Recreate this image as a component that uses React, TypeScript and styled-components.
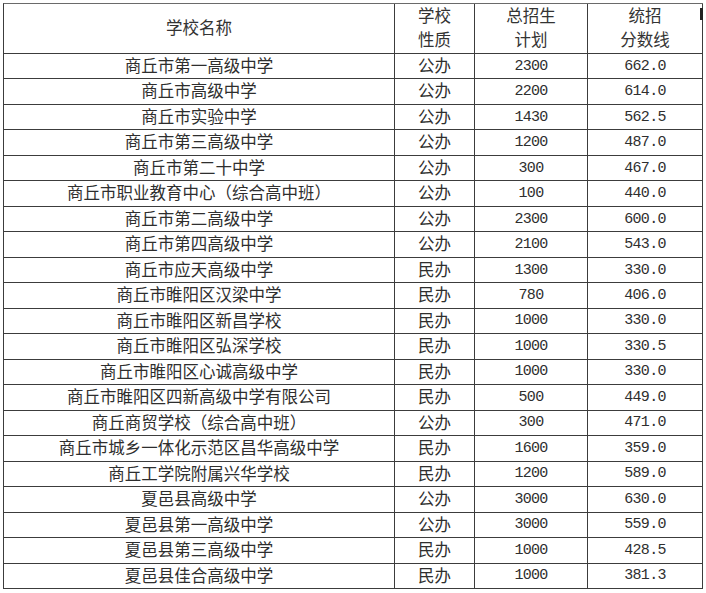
import React from "react";
import styled, { createGlobalStyle } from "styled-components";

const Global = createGlobalStyle`
  html, body { margin: 0; padding: 0; background: #fff; }
  body { font-family: "Noto Sans CJK SC", "Noto Sans", sans-serif; }
`;

const Page = styled.div`
  padding: 3px;
  width: 706px;
  height: 593px;
  box-sizing: border-box;
  position: relative;
`;

const Grid = styled.div`
  display: grid;
  grid-template-columns: 391px 80px 113px 115px;
  grid-template-rows: 50px repeat(21, 1fr);
  width: 700px;
  height: 586px;
  box-sizing: border-box;
  border-left: 1px solid #3c3c3c;
  border-top: 1px solid #6a6a6a;
`;

const Cell = styled.div<{ $num?: boolean }>`
  box-sizing: border-box;
  border-right: 1px solid #3c3c3c;
  border-bottom: 1px solid #3c3c3c;
  display: flex;
  align-items: center;
  justify-content: center;
  color: #2e2e2e;
  white-space: nowrap;
  padding-bottom: ${(p) => (p.$num ? "0" : "2px")};
  font-family: ${(p) =>
    p.$num
      ? `"Liberation Mono", "DejaVu Sans Mono", monospace`
      : `"Noto Sans CJK SC", "Noto Sans", sans-serif`};
  font-size: ${(p) => (p.$num ? "15px" : "16.5px")};
  letter-spacing: ${(p) => (p.$num ? "-0.7px" : "0")};
  line-height: 1;
`;

const HeadCell = styled(Cell)`
  flex-direction: column;
  line-height: 24px;
  padding-bottom: 3px;
  color: #333;
`;

const Mark = styled.div`
  position: absolute;
  left: 700px;
  top: 8px;
  width: 3px;
  height: 12px;
  background: #222;
`;

type Row = [string, string, string, string];

const rows: Row[] = [
  ["商丘市第一高级中学", "公办", "2300", "662.0"],
  ["商丘市高级中学", "公办", "2200", "614.0"],
  ["商丘市实验中学", "公办", "1430", "562.5"],
  ["商丘市第三高级中学", "公办", "1200", "487.0"],
  ["商丘市第二十中学", "公办", "300", "467.0"],
  ["商丘市职业教育中心（综合高中班）", "公办", "100", "440.0"],
  ["商丘市第二高级中学", "公办", "2300", "600.0"],
  ["商丘市第四高级中学", "公办", "2100", "543.0"],
  ["商丘市应天高级中学", "民办", "1300", "330.0"],
  ["商丘市睢阳区汉梁中学", "民办", "780", "406.0"],
  ["商丘市睢阳区新昌学校", "民办", "1000", "330.0"],
  ["商丘市睢阳区弘深学校", "民办", "1000", "330.5"],
  ["商丘市睢阳区心诚高级中学", "民办", "1000", "330.0"],
  ["商丘市睢阳区四新高级中学有限公司", "民办", "500", "449.0"],
  ["商丘商贸学校（综合高中班）", "公办", "300", "471.0"],
  ["商丘市城乡一体化示范区昌华高级中学", "民办", "1600", "359.0"],
  ["商丘工学院附属兴华学校", "民办", "1200", "589.0"],
  ["夏邑县高级中学", "公办", "3000", "630.0"],
  ["夏邑县第一高级中学", "公办", "3000", "559.0"],
  ["夏邑县第三高级中学", "民办", "1000", "428.5"],
  ["夏邑县佳合高级中学", "民办", "1000", "381.3"],
];

export default function App() {
  return (
    <Page>
      <Global />
      <Grid role="table">
        <HeadCell>学校名称</HeadCell>
        <HeadCell>
          <span>学校</span>
          <span>性质</span>
        </HeadCell>
        <HeadCell>
          <span>总招生</span>
          <span>计划</span>
        </HeadCell>
        <HeadCell>
          <span>统招</span>
          <span>分数线</span>
        </HeadCell>
        {rows.map((r, i) => (
          <React.Fragment key={i}>
            <Cell>{r[0]}</Cell>
            <Cell>{r[1]}</Cell>
            <Cell $num>{r[2]}</Cell>
            <Cell $num>{r[3]}</Cell>
          </React.Fragment>
        ))}
      </Grid>
      <Mark />
    </Page>
  );
}
